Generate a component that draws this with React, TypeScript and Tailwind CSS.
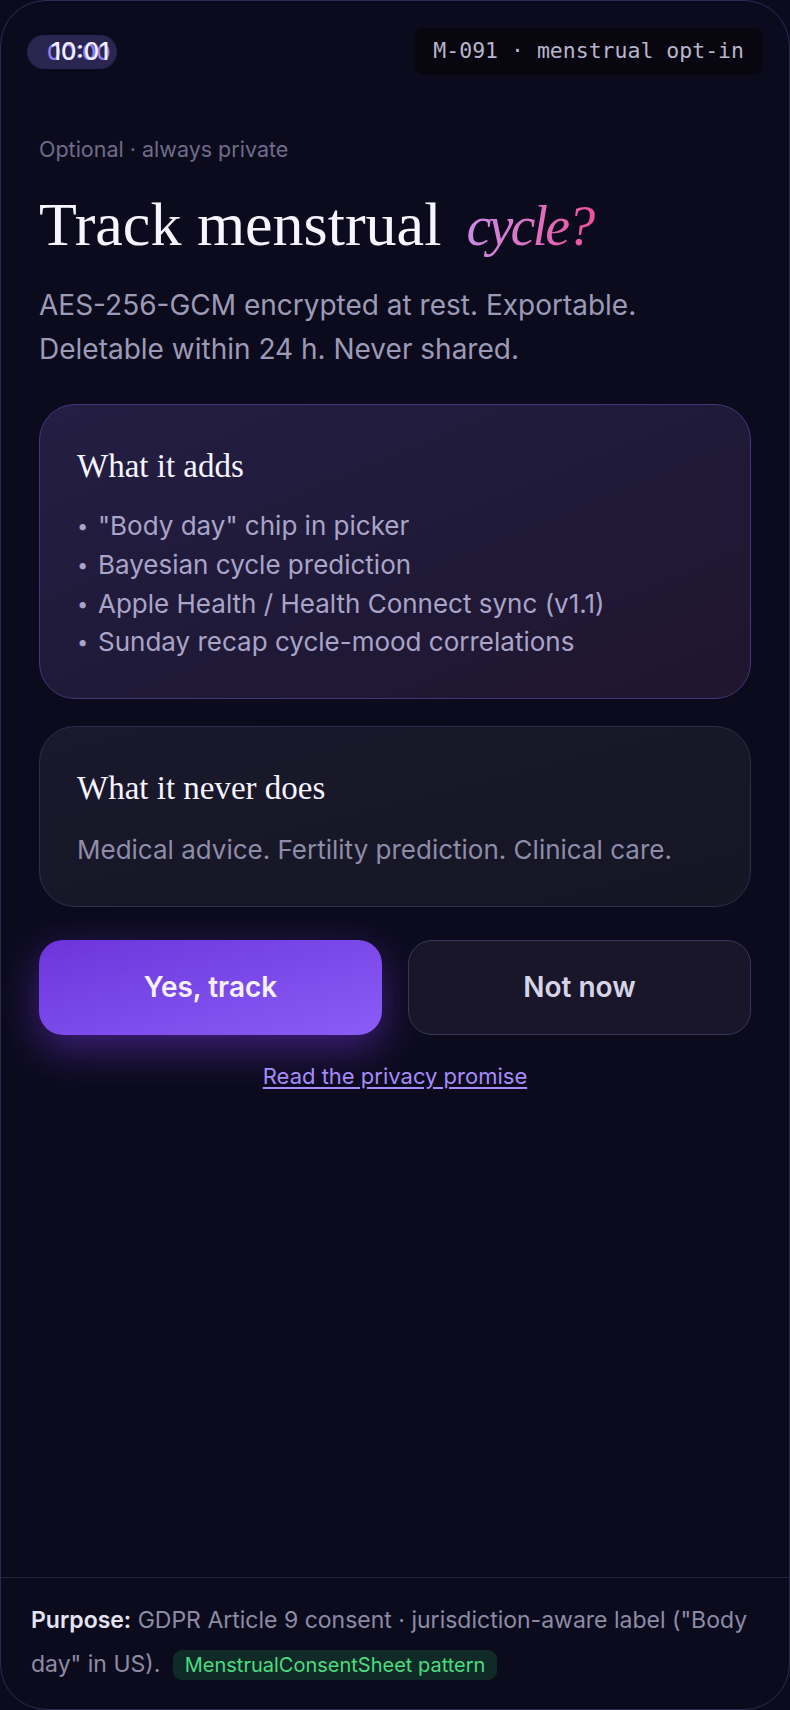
import React from 'react';

const sans = { fontFamily: 'Inter, "Noto Sans", sans-serif' };
const serif = { fontFamily: '"Liberation Serif", "DejaVu Serif", serif' };
const mono = { fontFamily: '"DejaVu Sans Mono", "Liberation Mono", monospace' };

const ADDS = [
  '"Body day" chip in picker',
  'Bayesian cycle prediction',
  'Apple Health / Health Connect sync (v1.1)',
  'Sunday recap cycle-mood correlations',
];

// Status bar: clock pill (with its ghosted duplicate) and the screen id tag.
function StatusBar() {
  return (
    <div className="flex items-center justify-between pl-[26px] pr-[26px] pt-[27px]">
      <div className="relative h-[34px] w-[90px] rounded-full bg-[#2a2650]">
        <span className="absolute left-[20px] top-[2px] text-[22px] leading-[30px] font-medium text-[#8f7ff0]" style={sans}>
          00:00
        </span>
        <span className="absolute left-[24px] top-[1px] text-[24px] leading-[32px] font-medium text-[#f1efff]" style={sans}>
          10:01
        </span>
      </div>
      <div
        className="flex h-[47px] items-center rounded-[10px] bg-[#08070f] px-[19px] text-[21.5px] text-[#b8b5cc]"
        style={mono}
      >
        M-091 · menstrual opt-in
      </div>
    </div>
  );
}

function Card({
  title,
  tone,
  children,
}: {
  title: string;
  tone: 'adds' | 'never';
  children: React.ReactNode;
}) {
  const cls =
    tone === 'adds'
      ? 'border-[#41377a] bg-gradient-to-br from-[#241e44] via-[#1f1a38] to-[#21152f]'
      : 'border-[#2f2c4c] bg-gradient-to-br from-[#1a192c] to-[#161524]';
  return (
    <div className={`rounded-[36px] border pl-[37px] pr-[37px] pt-[41px] pb-[36px] ${cls}`}>
      <div className="text-[33px] leading-[40px] text-[#f6f4ff]" style={serif}>
        {title}
      </div>
      {children}
    </div>
  );
}

export default function App() {
  return (
    <div className="min-h-screen bg-[#0c0b1e]">
      <div
        className="flex h-[1710px] w-[790px] flex-col overflow-hidden rounded-[46px] border border-[#2e2957] bg-[#0c0b1e]"
        style={sans}
      >
        <StatusBar />

        <div className="px-[38px]">
          <div className="mt-[59px] text-[21.5px] leading-[30px] text-[#6f6c8a]">Optional · always private</div>

          <h1 className="mt-[23px] flex items-baseline text-[62px] leading-[74px] text-[#f7f5ff]" style={serif}>
            <span>Track menstrual</span>
            <span className="ml-[25px] bg-gradient-to-r from-[#c98be8] to-[#ee4f9a] bg-clip-text pr-[4px] text-[56px] italic tracking-[-0.05em] text-transparent">
              cycle?
            </span>
          </h1>

          <p className="mt-[21px] text-[28px] leading-[43.5px] text-[#9d9ab6]">
            AES-256-GCM encrypted at rest. Exportable.
            <br />
            Deletable within 24 h. Never shared.
          </p>

          <div className="mt-[33px]">
            <Card title="What it adds" tone="adds">
              <ul className="mt-[21px] text-[26px] leading-[38.8px] text-[#a9a4c8]">
                {ADDS.map((a) => (
                  <li key={a} className="flex gap-[7px]">
                    <span className="w-[14px] text-[20px]">•</span>
                    <span>{a}</span>
                  </li>
                ))}
              </ul>
            </Card>
          </div>

          <div className="mt-[27px]">
            <Card title="What it never does" tone="never">
              <div className="mt-[23px] text-[26px] leading-[38.8px] text-[#8f8ca8]">
                Medical advice. Fertility prediction. Clinical care.
              </div>
            </Card>
          </div>

          <div className="mt-[33px] grid grid-cols-2 gap-[26px]">
            <button className="h-[95px] rounded-[24px] bg-gradient-to-br from-[#6c34db] to-[#8b5cf6] text-[28px] font-semibold text-[#f6f2ff] shadow-[0_14px_40px_rgba(124,58,237,0.45)]">
              Yes, track
            </button>
            <button className="h-[95px] rounded-[24px] border border-[#3a355e] bg-[#181628] text-[28px] font-semibold text-[#d6d4e6]">
              Not now
            </button>
          </div>

          <div className="mt-[26px] text-center text-[22px] leading-[30px]">
            <a className="text-[#a78bfa] underline underline-offset-[3px]">Read the privacy promise</a>
          </div>
        </div>

        <div className="flex-1" />

        <div className="border-t border-[#24213e] px-[30px] pt-[20px] pb-[22px] text-[23px] leading-[44px] text-[#8e8ba5]">
          <span className="font-semibold text-[#e6e4f2]">Purpose:</span> GDPR Article 9 consent · jurisdiction-aware label ("Body
          day" in US).{' '}
          <span className="ml-[6px] rounded-[9px] bg-[#102a27] px-[12px] py-[3px] text-[20px] text-[#4ade80]">
            MenstrualConsentSheet pattern
          </span>
        </div>
      </div>
    </div>
  );
}
